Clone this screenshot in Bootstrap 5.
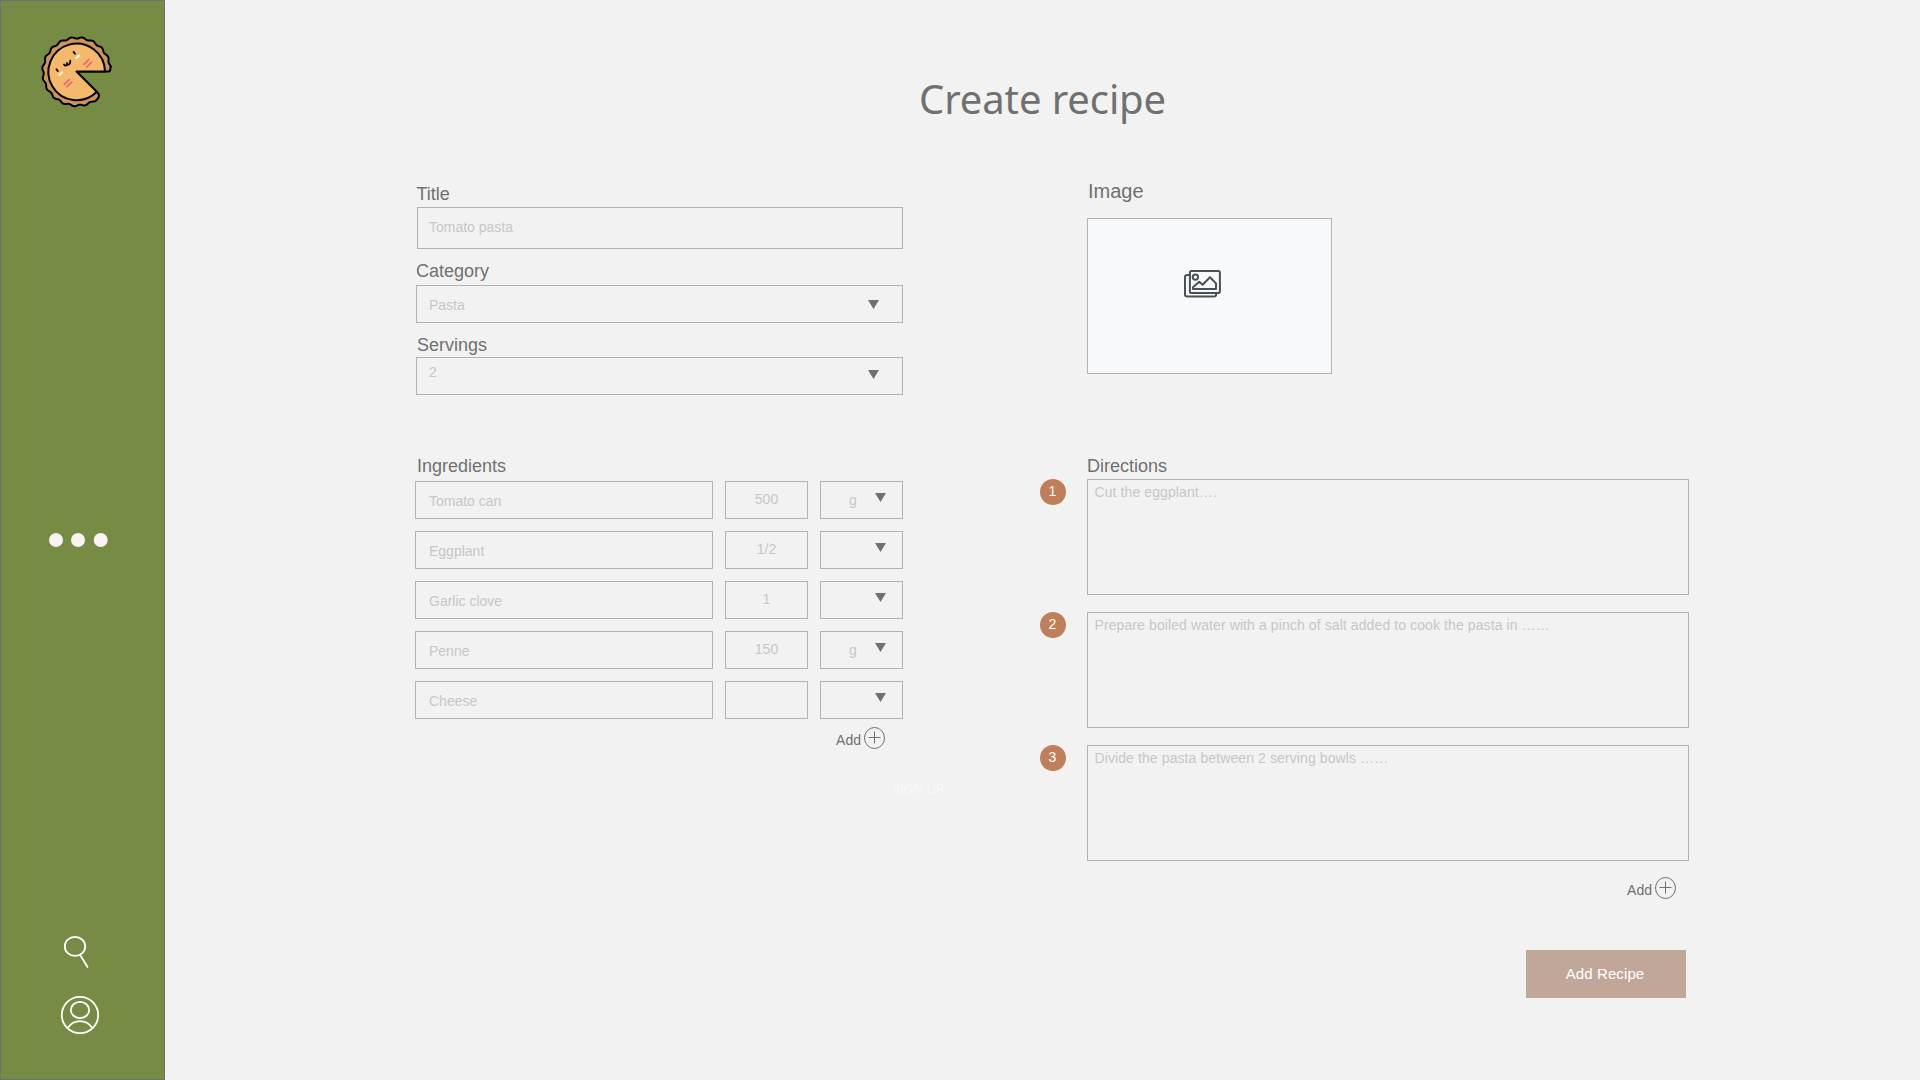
<!DOCTYPE html>
<html lang="en">
<head>
<meta charset="utf-8">
<title>Create recipe</title>
<link href="https://cdn.jsdelivr.net/npm/bootstrap@5.3.0/dist/css/bootstrap.min.css" rel="stylesheet">
<style>
body{background:#f2f2f2;color:#707070;font-family:"Liberation Sans",Arial,sans-serif;width:1920px;height:1080px;overflow:hidden}
svg{display:block;flex:none}
.side{width:165px;height:1080px;background:#768c45;border:1px solid #707070}
.logo{margin:33px 0 0 39px}
.dots{margin:420px 0 0 47px}
.find{margin:385px 0 0 61px}
.user{margin:25px 0 0 59px}
.page-title{font:400 40px/48px "Noto Sans",sans-serif;letter-spacing:-.1px;margin:75px 0 57px 754px}
.col-a{width:488px;margin-left:250px;padding-top:4px}
.col-b{width:649px;margin-left:137px}
.lbl{font-size:18px;line-height:20px;height:20px}
.lbl-title{margin:0 0 3px 1.5px}
.lbl-cat{margin:12px 0 4px 1px}
.lbl-serv{margin:12px 0 2px 2px}
.lbl-ing{margin:61px 0 5px 2px}
.lbl-dir{margin:0 0 3px 47px}
.lbl-img{font-size:20px;line-height:22px;margin:0 0 16px 48px}
.box{display:flex;border:1px solid #b3b3b3;font-size:14px;line-height:16px;color:#c7c7c7;height:38px;padding:11px 23px 0 12px;width:487px;margin-left:1px}
.box-title{width:486px;height:42px;margin-left:2px;padding-left:11px}
.box-serv{padding-top:6px}
.tri{width:0;height:0;border:5.5px solid transparent;border-top:9px solid #707070;border-bottom:0;margin:3px 0 0 auto}
.tri{width:11px;height:9px;border:0;background:#707070;clip-path:polygon(0 0,100% 0,50% 100%)}
.box-serv .tri{margin-top:6px}
.item{gap:12px;margin-bottom:12px}
.item .box{margin:0}
.item .qty{width:83px;justify-content:center;padding:9px 0 0}
.item .unit{width:83px;padding:10px 16px 0 28px}
.item .unit .tri{margin-top:1px}
.item .name{width:298px;padding:11px 12px 0 13px}
.box.area{height:116px;padding:4px 7px 0 6.5px;width:602px;margin:0;letter-spacing:.1px}
.direction{margin-bottom:17px}
.step{width:26px;height:26px;border-radius:50%;background:#bf7f5a;color:#fff;font-size:14px;line-height:24px;text-align:center;margin-right:21px;padding-right:1px}
.adder{font-size:14px;line-height:16px;gap:2px;color:#707070}
.adder span{padding-top:6px}
.adder-a{margin:-5px 17px 0 0}
.adder-b{margin:-2px 12px 0 0}
.drop{width:245px;height:156px;background:#f8f9fb;border:1px solid #b3b3b3;margin:0 0 82px 47px;padding:50px 0 0 94px}
.save{width:160px;height:48px;border-radius:0;background:#c0a79a;color:#fff;font-size:15px;line-height:48px;padding:0 2px 0 0;border:0;margin:50px 3px 0 auto;letter-spacing:.1px}
.ghost{font:13px/14px Lato,sans-serif;color:#f9f7f7;margin:32px 0 0 478px;white-space:nowrap}
</style>
<script src="https://cdn.jsdelivr.net/npm/bootstrap@5.3.0/dist/js/bootstrap.bundle.min.js"></script>
</head>
<body class="d-flex">
<nav class="side flex-shrink-0">
  <svg class="logo" width="74" height="76" viewBox="40 34 74 76" stroke="#000" stroke-width="2" stroke-linejoin="round" stroke-linecap="round" fill="none">
    <path id="crust" fill="#cd9556"/>
    <path d="M76.5 71.5H105A28.3 28.3 0 1 0 96.8 91.8Z" fill="#f5b96e"/>
    <path d="M73.6 51.9l1.4 1.8M56.4 69.2l1.4 1.8M64 64.4q1.4 2.2 3.4.2l-.5-1.6m.5 1.6q3 .2 2.9-3.9" stroke-width="1.8"/>
    <path d="M76.4 58l2.8-2.4M59.3 75l2.8-2.4" stroke="#fff"/>
    <path d="M84 64.4l4.9-4.9M86.7 67l4.9-4.9M64.3 84.3l4.9-4.6M67 86.6l4.9-4.6" stroke="#e8637a" stroke-width="1.7"/>
  </svg>
  <svg class="dots" width="64" height="20" viewBox="48 530 64 20" fill="#f9f3f3"><circle cx="56" cy="540" r="7"/><circle cx="78" cy="540" r="7"/><circle cx="100.7" cy="540" r="7"/></svg>
  <svg class="find" width="30" height="35" viewBox="62 935 30 35" fill="none" stroke="#fff" stroke-width="1.8" stroke-linecap="round"><ellipse cx="75" cy="946.4" rx="10.2" ry="9.5"/><path d="M80.2 955l7.3 12"/></svg>
  <svg class="user" width="40" height="40" viewBox="60 995 40 40" fill="none" stroke="#fff" stroke-width="1.8"><circle cx="80" cy="1015" r="18.2"/><ellipse cx="80" cy="1010" rx="9.2" ry="8.1"/><path d="M67.8 1027.8Q72.5 1021.2 80 1021.2T92.2 1027.8"/></svg>
</nav>
<main class="flex-grow-1">
  <h1 class="page-title">Create recipe</h1>
  <div class="d-flex align-items-start">
    <section class="col-a">
      <div class="lbl lbl-title">Title</div>
      <div class="box box-title">Tomato pasta</div>
      <div class="lbl lbl-cat">Category</div>
      <div class="box">Pasta<i class="tri"></i></div>
      <div class="lbl lbl-serv">Servings</div>
      <div class="box box-serv">2<i class="tri"></i></div>
      <div class="lbl lbl-ing">Ingredients</div>
      <div class="item d-flex"><div class="box name">Tomato can</div><div class="box qty">500</div><div class="box unit">g<i class="tri"></i></div></div>
      <div class="item d-flex"><div class="box name">Eggplant</div><div class="box qty">1/2</div><div class="box unit"><i class="tri"></i></div></div>
      <div class="item d-flex"><div class="box name">Garlic clove</div><div class="box qty">1</div><div class="box unit"><i class="tri"></i></div></div>
      <div class="item d-flex"><div class="box name">Penne</div><div class="box qty">150</div><div class="box unit">g<i class="tri"></i></div></div>
      <div class="item d-flex"><div class="box name">Cheese</div><div class="box qty"></div><div class="box unit"><i class="tri"></i></div></div>
      <div class="adder adder-a d-flex justify-content-end"><span>Add</span><svg width="23" height="24" fill="none" stroke="#707070"><ellipse cx="11.5" cy="12" rx="10" ry="10.5"/><path d="M5.5 11.5h12M11.5 5.5v12"/></svg></div>
      <div class="ghost">SIGN UP</div>
    </section>
    <section class="col-b">
      <div class="lbl-img">Image</div>
      <div class="drop"><svg width="42" height="32" viewBox="1182 269 42 32" fill="none" stroke="#495057" stroke-width="2" stroke-linejoin="round"><rect x="1189.9" y="270.9" width="30" height="22.2" rx="1.5"/><path d="M1189.5 274.9h-2.2q-2.3 0-2.3 2.3v17.1q0 2.3 2.3 2.3h26.6q2.3 0 2.3-2.3v-.8"/><circle cx="1195.4" cy="277.1" r="2.7"/><path d="M1193 289v-1.8l6.2-5.4 3.4 2.9 7.4-7.5 6 6.2v5.6z"/></svg></div>
      <div class="lbl lbl-dir">Directions</div>
      <div class="direction d-flex"><div class="step">1</div><div class="box area">Cut the eggplant….</div></div>
      <div class="direction d-flex"><div class="step">2</div><div class="box area">Prepare boiled water with a pinch of salt added to cook the pasta in ……</div></div>
      <div class="direction d-flex"><div class="step">3</div><div class="box area">Divide the pasta between 2 serving bowls ……</div></div>
      <div class="adder adder-b d-flex justify-content-end"><span>Add</span><svg width="23" height="24" fill="none" stroke="#707070"><ellipse cx="11.5" cy="12" rx="10" ry="10.5"/><path d="M5.5 11.5h12M11.5 5.5v12"/></svg></div>
      <button class="btn save d-block">Add Recipe</button>
    </section>
  </div>
</main>
<script>
// wavy crust: radius oscillates around 34px, leaving a 45 degree slice open
let d='M76.5 71.5H109Q110.6 71 110.4 67';
for(let a=8;a<=307;a+=2){const t=a*Math.PI/180,r=33.9+.8*Math.cos((a-99.25)*2*Math.PI/18.5);d+=`L${(76.8+r*Math.cos(t)).toFixed(2)} ${(71.7-r*Math.sin(t)).toFixed(2)}`}
document.getElementById('crust').setAttribute('d',d+'Q100 96.5 98.5 93.7Z');
</script>
</body>
</html>
